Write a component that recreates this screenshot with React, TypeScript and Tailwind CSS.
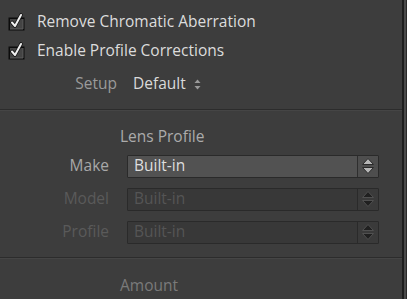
const FONT = "font-['Open_Sans',_'Noto_Sans',_sans-serif]";

function CheckIcon() {
  return (
    <svg width="18" height="18" viewBox="0 0 18 18" className="shrink-0">
      <rect x="1.5" y="4.5" width="16" height="13" fill="#0c0c0c" />
      <rect x="3" y="6" width="13" height="10" fill="#444444" />
      <path d="M3 16 L16 16 L16 6" fill="none" stroke="#5c5c5c" strokeWidth="1" />
      <path d="M5 9.5 L8 13 L14 2" fill="none" stroke="#151515" strokeWidth="3.6" strokeLinejoin="round" strokeLinecap="round" />
      <path d="M5 9.5 L8 13 L14 2" fill="none" stroke="#f0f0f0" strokeWidth="2" strokeLinejoin="round" strokeLinecap="round" />
    </svg>
  );
}

function Stepper({ disabled }: { disabled?: boolean }) {
  const fill = disabled ? '#202020' : '#b5b5b5';
  const stroke = disabled ? '#505050' : '#2a2a2a';
  return (
    <svg width="14" height="18" viewBox="0 0 14 18">
      <path d="M7 1.5 L12.5 7.5 L1.5 7.5 Z" fill={fill} stroke={stroke} strokeWidth="1" strokeLinejoin="round" />
      <path d="M7 16.5 L12.5 10.5 L1.5 10.5 Z" fill={fill} stroke={stroke} strokeWidth="1" strokeLinejoin="round" />
    </svg>
  );
}

function SelectRow({ label, disabled }: { label: string; disabled?: boolean }) {
  return (
    <div className="flex items-center h-[22px]">
      <div className={`w-[109px] text-right text-[15.5px] ${disabled ? 'text-[#5a5a5a]' : 'text-[#a8a8a8]'}`}>{label}</div>
      <div
        className={`ml-[18px] w-[252px] h-[23px] flex border rounded-[1px] ${
          disabled ? 'border-[#2a2a2a] bg-[#383838]' : 'border-[#2a2a2a] bg-[#525252]'
        }`}
      >
        <div className={`flex-1 flex items-center pl-[6px] text-[15.5px] leading-none ${disabled ? 'text-[#555555]' : 'text-[#dedede]'}`}>
          Built-in
        </div>
        <div className={`w-[21px] flex items-center justify-center border-l ${disabled ? 'border-[#2a2a2a] bg-[#3a3a3a]' : 'border-[#2e2e2e] bg-[#4e4e4e]'}`}>
          <Stepper disabled={disabled} />
        </div>
      </div>
    </div>
  );
}

export default function App() {
  return (
    <div className={`w-[407px] h-[299px] bg-[#3d3d3d] flex overflow-hidden ${FONT}`}>
      <div className="w-[402px] flex flex-col">
        {/* Top checkboxes */}
        <div className="pt-[10px] flex flex-col">
          <div className="flex items-center h-[24px] pl-[7px]">
            <CheckIcon />
            <span className="ml-[12px] text-[15.5px] text-[#dcdcdc]">Remove Chromatic Aberration</span>
          </div>
          <div className="flex items-center h-[24px] mt-[5px] pl-[7px]">
            <CheckIcon />
            <span className="ml-[12px] text-[15.5px] text-[#dcdcdc]">Enable Profile Corrections</span>
          </div>
          <div className="flex items-center h-[24px] mt-[9px]">
            <span className="w-[117px] text-right text-[15.5px] text-[#9a9a9a]">Setup</span>
            <span className="ml-[16px] text-[15.5px] text-[#dadada]">Default</span>
            <svg width="7" height="11" viewBox="0 0 7 11" className="ml-[8px]">
              <path d="M3.5 0.5 L6.5 4 L0.5 4 Z" fill="#9a9a9a" />
              <path d="M3.5 10.5 L6.5 7 L0.5 7 Z" fill="#9a9a9a" />
            </svg>
          </div>
        </div>

        <div className="mt-[13px] border-t border-[#2c2c2c] border-b border-b-[#454545]" />

        {/* Lens profile */}
        <div className="flex flex-col">
          <div className="h-[24px] mt-[14px] pl-[120px] text-[15.5px] text-[#ababab] flex items-center">Lens Profile</div>
          <div className="mt-[6px] flex flex-col gap-[11px]">
            <SelectRow label="Make" />
            <SelectRow label="Model" disabled />
            <SelectRow label="Profile" disabled />
          </div>
        </div>

        <div className="mt-[14px] border-t border-[#2c2c2c] border-b border-b-[#454545]" />

        <div className="h-[24px] mt-[15px] pl-[120px] text-[15.5px] text-[#7a7a7a] flex items-center">Amount</div>
      </div>
      <div className="w-[2px] bg-[#1e1e1e]" />
      <div className="w-[2px] bg-[#4a4a4a]" />
      <div className="flex-1 bg-[#2a2a2a]" />
    </div>
  );
}
